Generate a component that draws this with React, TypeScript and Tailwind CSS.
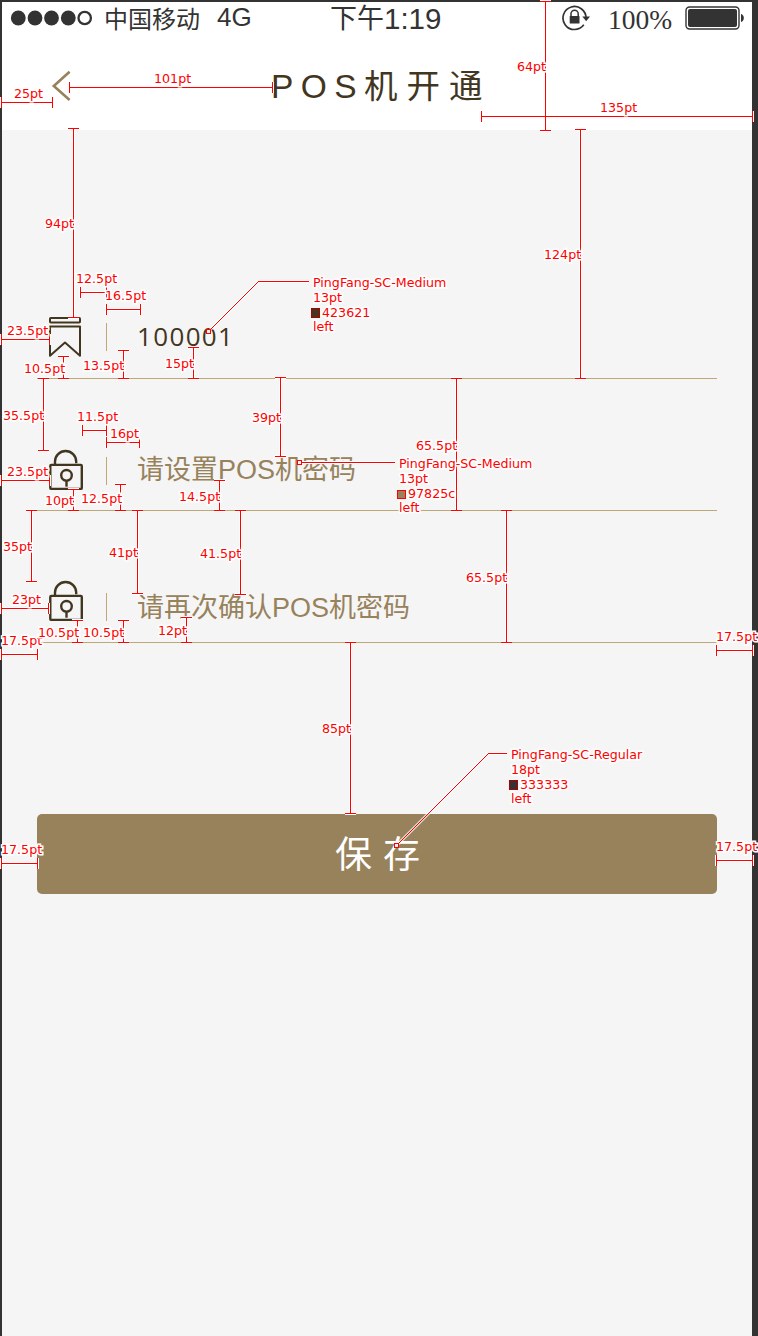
import type { ReactNode } from 'react';

type Vertical = [x: number, top: number, bottom: number];
type Horizontal = [left: number, right: number, y: number];
type Label = [x: number, middle: number, text: string];

const verticals: Vertical[] = [
  [73, 128, 317], [545, 1, 130], [580, 129, 378], [63, 356, 378], [123, 350, 378],
  [193, 347, 378], [43, 378, 450], [280, 377, 456], [456, 378, 510], [73, 489, 510],
  [120, 484, 510], [219, 480, 510], [31, 510, 581], [137, 510, 593], [240, 510, 594],
  [506, 510, 642], [77, 620, 642], [123, 620, 642], [186, 617, 642], [350, 642, 813],
];

const horizontals: Horizontal[] = [
  [1, 52, 102], [69, 272, 87], [481, 752, 116], [80, 106, 292], [106, 140, 309],
  [1, 49, 339], [82, 106, 430], [106, 139, 442], [1, 49, 480], [1, 48, 608],
  [1, 37, 654], [716, 752, 650], [1, 37, 863], [716, 752, 860],
];

const labels: Label[] = [
  [14, 93, '25pt'], [154, 78, '101pt'], [517, 66, '64pt'], [600, 107, '135pt'],
  [45, 223, '94pt'], [544, 254, '124pt'], [76, 278, '12.5pt'], [105, 295, '16.5pt'],
  [7, 330, '23.5pt'], [24, 368, '10.5pt'], [83, 365, '13.5pt'], [165, 363, '15pt'],
  [3, 415, '35.5pt'], [77, 416, '11.5pt'], [110, 433, '16pt'], [252, 417, '39pt'],
  [416, 445, '65.5pt'], [7, 471, '23.5pt'], [45, 500, '10pt'], [81, 498, '12.5pt'],
  [179, 496, '14.5pt'], [3, 546, '35pt'], [109, 552, '41pt'], [200, 553, '41.5pt'],
  [466, 577, '65.5pt'], [12, 599, '23pt'], [1, 640, '17.5pt'], [38, 632, '10.5pt'],
  [83, 632, '10.5pt'], [158, 630, '12pt'], [716, 636, '17.5pt'], [322, 728, '85pt'],
  [1, 849, '17.5pt'], [716, 846, '17.5pt'],
  [313, 282, 'PingFang-SC-Medium'], [313, 297, '13pt'], [322, 312, '423621'], [313, 326, 'left'],
  [399, 463, 'PingFang-SC-Medium'], [399, 478, '13pt'], [408, 493, '97825c'], [399, 507, 'left'],
  [511, 754, 'PingFang-SC-Regular'], [511, 769, '18pt'], [520, 784, '333333'], [511, 798, 'left'],
];

const verticalPath = verticals
  .map(([x, a, b]) => `M${x + 0.5} ${a}V${b + 1}M${x - 5} ${a + 0.5}h11M${x - 5} ${b + 0.5}h11`)
  .join('');
const horizontalPath = horizontals
  .map(([a, b, y]) => `M${a} ${y + 0.5}H${b + 1}M${a + 0.5} ${y - 5}v11M${b + 0.5} ${y - 5}v11`)
  .join('');
const rulerPath = verticalPath + horizontalPath + 'M258 281.5H309M302 462.5H395M488 753.5H507';

function Annotations() {
  return (
    <div className="pointer-events-none absolute inset-0 overflow-hidden">
      <svg width="758" height="1336" className="absolute inset-0" fill="none">
        <path d={rulerPath} stroke="#fff" strokeWidth="3" shapeRendering="crispEdges" />
        <path d="M210 330L258.500 281.500M398 844L488.500 753.500" stroke="#fff" strokeOpacity=".75" strokeWidth="3" />
        <path d={rulerPath} stroke="#f00" strokeWidth="1" shapeRendering="crispEdges" />
        <path d="M210 330L258.500 281.500M398 844L488.500 753.500" stroke="#f00" strokeWidth="1" />
        {[[208.5, 331.5], [299.5, 462.5], [396.5, 845.5]].map(([x, y]) => (
          <rect key={x} x={x - 2} y={y - 2} width="4" height="4" fill="#f5f5f5" stroke="#f00" />
        ))}
        <rect x="311.500" y="308.500" width="8" height="9" fill="#423621" stroke="#a00" />
        <rect x="397.500" y="490.500" width="8" height="8" fill="#97825c" stroke="#f00" />
        <rect x="509.500" y="780.500" width="8" height="9" fill="#333" stroke="#a00" />
      </svg>
      {labels.map(([x, y, text]) => (
        <span
          key={`${x}-${y}`}
          style={{ left: x, top: y - 6 }}
          className="absolute whitespace-nowrap font-['DejaVu_Sans',sans-serif] text-[12.65px] leading-[14px] text-[#f00] [-webkit-text-stroke:3px_#fff] [paint-order:stroke]"
        >
          {text}
        </span>
      ))}
    </div>
  );
}

function StatusBar() {
  return (
    <div className="flex h-[34px] items-center text-[#333]">
      <svg width="84" height="16" viewBox="0 0 84 16" className="-mt-0.5 ml-2 shrink-0" fill="currentColor">
        <circle cx="8.300" cy="8" r="7.400" />
        <circle cx="25" cy="8" r="7.400" />
        <circle cx="41.500" cy="8" r="7.400" />
        <circle cx="58.300" cy="8" r="7.400" />
        <circle cx="74.700" cy="8" r="6.200" fill="none" stroke="currentColor" strokeWidth="2.300" />
      </svg>
      <span className="ml-[10px] w-[113px] shrink-0 pt-0.5 text-[24px]">中国移动</span>
      <span className="w-[113px] shrink-0 pb-[3px] text-[26px]">4G</span>
      <span className="flex w-[231px] shrink-0 items-center text-[27px]">
        下午<span className="text-[29.500px]">1:19</span>
      </span>
      <svg width="30" height="28" viewBox="0 0 30 28" className="-mt-[3px] shrink-0" fill="none" stroke="currentColor">
        <path d="M22.800 20.800A11.500 11.500 0 1 1 25 14.500" strokeWidth="1.700" />
        <path d="M21.300 12.600h7.700l-3.800 4.600z" fill="currentColor" stroke="none" />
        <path d="M10 12V9.800a3.600 3.600 0 0 1 7.200 0V12" strokeWidth="1.500" />
        <rect x="8.700" y="12" width="9.800" height="7.600" rx=".6" fill="currentColor" stroke="none" />
      </svg>
      <span className="ml-[17px] w-[77px] shrink-0 pt-[2px] font-['Liberation_Serif',serif] text-[27.500px]">100%</span>
      <svg width="60" height="24" viewBox="0 0 60 24" className="-mt-[2px] shrink-0" fill="currentColor">
        <rect x="1" y="1" width="53" height="22" rx="3.500" fill="none" stroke="currentColor" strokeWidth="1.400" />
        <rect x="3" y="3" width="49" height="18" rx="2" />
        <path d="M56 8c1.800.5 2.800 2 2.800 4s-1 3.500-2.800 4z" />
      </svg>
    </div>
  );
}

function BookmarkIcon() {
  return (
    <svg width="36" height="42" viewBox="0 0 36 42" fill="none" stroke="#423621" strokeWidth="2" strokeLinejoin="round">
      <rect x="2" y="2" width="30" height="4.500" rx=".8" />
      <path d="M2 10.500h30v29.300L17 26.500 2 39.800z" />
    </svg>
  );
}

function LockIcon() {
  return (
    <svg width="36" height="42" viewBox="0 0 36 42" fill="none" stroke="#423621" strokeWidth="2.400" strokeLinejoin="round">
      <path d="M7 15.500v-2.900a10.600 10.600 0 0 1 21.200 0v1.700" />
      <rect x="2.300" y="15.900" width="31.500" height="24" rx="1" />
      <circle cx="18.500" cy="26.300" r="5.300" />
      <path d="M18.500 31.500v6.200" />
    </svg>
  );
}

interface FieldProps {
  height: string;
  icon: ReactNode;
  iconOffset: string;
  dividerOffset: string;
  textOffset: string;
  children: ReactNode;
}

function Field({ height, icon, iconOffset, dividerOffset, textOffset, children }: FieldProps) {
  return (
    <div className={`flex items-start border-b border-[#bfa878] pl-[11px] ${height}`}>
      <div className={`w-[58px] shrink-0 ${iconOffset}`}>{icon}</div>
      <div className={`h-7 w-px shrink-0 bg-[#bfa878] ${dividerOffset}`} />
      <div className={`ml-[30px] text-[27px] leading-[30px] text-[#97825c] ${textOffset}`}>{children}</div>
    </div>
  );
}

export default function App() {
  return (
    <div className="relative h-[1336px] w-[758px]">
      <div className="h-full border-t-2 border-r-[6px] border-l-2 border-[#333] bg-[#f5f5f5] font-['Liberation_Sans','Noto_Sans_CJK_SC',sans-serif]">
        <header className="h-32 bg-white">
          <StatusBar />
          <div className="flex h-[94px] items-start">
            <svg width="22" height="32" viewBox="0 0 22 32" className="mt-[34px] ml-[49px] shrink-0" fill="none" stroke="#97825c" strokeWidth="2.600">
              <path d="M18.600 1.700L2.800 16l15.800 14" />
            </svg>
            <h1 className="mt-[31px] ml-[198px] flex text-[33.500px] leading-10 text-[#423621]">
              <span className="tracking-[7.400px]">POS</span>
              <span className="tracking-[9px]">机开通</span>
            </h1>
          </div>
        </header>

        <main className="mr-[35px] ml-[35px]">
          <Field height="h-[249px]" icon={<BookmarkIcon />} iconOffset="mt-[186px]" dividerOffset="mt-[193px]" textOffset="mt-[191px]">
            <span className="font-['Open_Sans',sans-serif] text-[26px] tracking-[1.350px] text-[#423621]">100001</span>
          </Field>
          <Field height="h-[132px]" icon={<LockIcon />} iconOffset="mt-[70px]" dividerOffset="mt-[78px]" textOffset="mt-[76px]">
            请设置POS机密码
          </Field>
          <Field height="h-[132px]" icon={<LockIcon />} iconOffset="mt-[69px]" dividerOffset="mt-[82px]" textOffset="mt-[82px]">
            请再次确认POS机密码
          </Field>
          <button className="mt-[171px] flex h-20 w-full items-center justify-center rounded-[5px] bg-[#97825c] pt-[3px] pl-3 text-[37px] tracking-[11px] text-white">
            保存
          </button>
        </main>
      </div>
      <Annotations />
    </div>
  );
}
